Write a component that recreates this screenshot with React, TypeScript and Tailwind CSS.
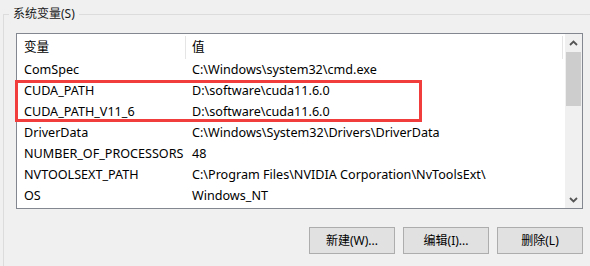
import { FC } from 'react'

const rows: [string, string][] = [
  ['ComSpec', 'C:\\Windows\\system32\\cmd.exe'],
  ['CUDA_PATH', 'D:\\software\\cuda11.6.0'],
  ['CUDA_PATH_V11_6', 'D:\\software\\cuda11.6.0'],
  ['DriverData', 'C:\\Windows\\System32\\Drivers\\DriverData'],
  ['NUMBER_OF_PROCESSORS', '48'],
  ['NVTOOLSEXT_PATH', 'C:\\Program Files\\NVIDIA Corporation\\NvToolsExt\\'],
  ['OS', 'Windows_NT'],
]

const Chevron: FC<{ up?: boolean }> = ({ up }) => (
  <svg width="9" height="6" viewBox="0 0 9 6" className="text-[#555]">
    <path
      d={up ? 'M1 5 L4.5 1.5 L8 5' : 'M1 1 L4.5 4.5 L8 1'}
      fill="none"
      stroke="currentColor"
      strokeWidth="1.8"
    />
  </svg>
)

const Button: FC<{ label: string }> = ({ label }) => (
  <button
    type="button"
    className="flex h-[27px] w-[86px] items-center justify-center border border-[#adadad] bg-[#e1e1e1] text-[12px] text-black"
  >
    {label}
  </button>
)

export default function App() {
  return (
    <div className="relative h-[266px] w-[590px] overflow-hidden bg-[#f0f0f0] font-['Noto_Sans','Noto_Sans_CJK_SC',sans-serif] text-[12px] text-black">
      <div className="relative ml-[3px] mt-[14px] h-[300px] border-l border-t border-[#dcdcdc] pl-[12px] pt-[18px]">
        <span className="absolute -top-[9px] left-[5px] bg-[#f0f0f0] px-[4px] leading-[16px] text-[#1a1a1a]">
          系统变量(S)
        </span>

        {/* list */}
        <div className="flex h-[176px] w-[567px] border border-[#828790] bg-white">
          <div className="flex-1 text-[12.6px]">
            <div className="flex h-[26px] w-[546px] items-center">
              <div className="w-[168px] pl-[7px]">变量</div>
              <div className="h-[23px] w-px bg-[#e5e5e5]" />
              <div className="flex-1 pl-[6px]">值</div>
              <div className="h-[23px] w-px bg-[#e5e5e5]" />
            </div>
            {rows.map(([name, value]) => (
              <div key={name} className="flex h-[21px] items-center whitespace-nowrap">
                <div className="w-[169px] pl-[7px]">{name}</div>
                <div className="pl-[6px]">{value}</div>
              </div>
            ))}
          </div>
          <div className="flex w-[17px] flex-col bg-[#f0f0f0]">
            <div className="flex h-[17px] items-center justify-center">
              <Chevron up />
            </div>
            <div className="mx-px mt-[1px] h-[54px] bg-[#cdcdcd]" />
            <div className="flex-1" />
            <div className="flex h-[17px] items-center justify-center">
              <Chevron />
            </div>
          </div>
        </div>

        {/* buttons */}
        <div className="mt-[18px] flex w-[567px] justify-end gap-[8px]">
          <Button label="新建(W)..." />
          <Button label="编辑(I)..." />
          <Button label="删除(L)" />
        </div>
      </div>

      {/* highlight */}
      <div className="absolute left-[15px] top-[80px] h-[42px] w-[407px] border-[3px] border-[#f23d3d]" />
    </div>
  )
}
